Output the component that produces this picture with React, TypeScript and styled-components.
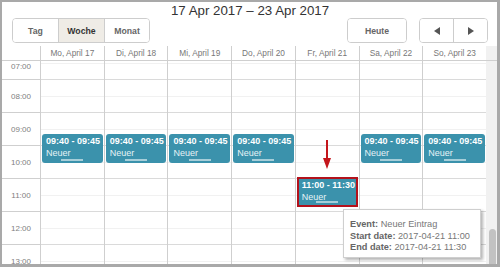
import React from 'react'
import styled, { createGlobalStyle } from 'styled-components'

const HOUR = 33
const HOURS = ['07:00', '08:00', '09:00', '10:00', '11:00', '12:00', '13:00', '14:00']
const DAYS = [
  'Mo, April 17',
  'Di, April 18',
  'Mi, April 19',
  'Do, April 20',
  'Fr, April 21',
  'Sa, April 22',
  'So, April 23'
]

type CalEvent = { day: number; top: number; height: number; time: string; text: string; selected?: boolean }

const events: CalEvent[] = [0, 1, 2, 3, 5, 6]
  .map((day): CalEvent => ({ day, top: 87, height: 29, time: '09:40 - 09:45', text: 'Neuer' }))
  .concat([{ day: 4, top: 130, height: 30, time: '11:00 - 11:30', text: 'Neuer', selected: true }])

const GlobalStyle = createGlobalStyle`
  html, body {
    margin: 0;
    padding: 0;
    background: #fff;
  }

  body {
    font-family: 'Liberation Sans', Arial, sans-serif;
  }

  *, *::before, *::after {
    box-sizing: border-box;
  }
`

const Frame = styled.div`
  background: #fff;
  border: solid #a9a9a9;
  border-width: 2px 3px 3px 2px;
  display: flex;
  flex-direction: column;
  height: 267px;
  overflow: hidden;
  position: relative;
  width: 500px;
`

const NavLine = styled.header`
  display: grid;
  flex: none;
  grid-template-rows: 14px 25px;
  padding: 2px 9px 3px 10px;
`

const Title = styled.div`
  color: #333;
  font-size: 13.3px;
  line-height: 14px;
  text-align: center;
`

const Toolbar = styled.div`
  display: flex;
  justify-content: space-between;
`

const ToolGroup = styled.div`
  display: flex;
  gap: 12px;
`

const Segmented = styled.div`
  border: 1px solid #cdcdcd;
  border-radius: 4px;
  display: flex;
  overflow: hidden;
`

const NavButton = styled.button<{ $width: number; $active?: boolean }>`
  align-items: center;
  background: ${(p) => (p.$active ? '#efece6' : '#fff')};
  border: none;
  color: ${(p) => (p.$active ? '#333' : '#666')};
  display: flex;
  font-family: inherit;
  font-size: 8.7px;
  font-weight: bold;
  justify-content: center;
  margin: 0;
  padding: 0;
  width: ${(p) => p.$width}px;

  & + & {
    border-left: 1px solid #cdcdcd;
  }
`

const HeaderRow = styled.div`
  border-bottom: 1px solid #cfcfcf;
  display: grid;
  flex: none;
  grid-template-columns: 38px repeat(7, 1fr) 11px;
  height: 15px;
`

const DayLabel = styled.div`
  border-left: 1px solid #cfcfcf;
  color: #777;
  font-size: 8.3px;
  line-height: 14px;
  text-align: center;
  white-space: nowrap;
`

const ScrollCorner = styled.div`
  background: #f1f1f1;
`

const Body = styled.div`
  display: grid;
  flex: 1;
  grid-template-columns: 1fr 11px;
  min-height: 0;
`

const Scroller = styled.div`
  overflow: hidden;
`

const Timeline = styled.div`
  display: grid;
  grid-template-columns: 38px repeat(7, 1fr);
  margin-top: -14px;
`

const HourScale = styled.div`
  display: flex;
  flex-direction: column;
`

const HourCell = styled.div`
  align-items: center;
  border-bottom: 1px solid #cfcfcf;
  color: #808080;
  display: flex;
  font-size: 8px;
  height: ${HOUR}px;
  justify-content: center;

  &:first-child {
    align-items: flex-end;
    padding-bottom: 8px;
  }
`

const DayColumn = styled.div`
  background: repeating-linear-gradient(
    to bottom,
    transparent 0 16px,
    #f1f1f1 16px 17px,
    transparent 17px 32px,
    #dadada 32px 33px
  );
  border-left: 1px solid #cfcfcf;
  height: ${HOURS.length * HOUR}px;
  position: relative;
`

const EventBox = styled.div<{ $selected?: boolean }>`
  background: #3b92ac;
  border: ${(p) => (p.$selected ? '2px solid #b3121c' : 'none')};
  border-radius: ${(p) => (p.$selected ? '0' : '3px')};
  color: #fff;
  left: 1px;
  padding: ${(p) => (p.$selected ? '1px 3px' : '2px 4px')};
  position: absolute;
  right: 1px;
`

const EventTime = styled.div`
  font-size: 9px;
  font-weight: bold;
  line-height: 11px;
  white-space: nowrap;
`

const EventText = styled.div`
  color: #e6f2f6;
  font-size: 9px;
  line-height: 12px;
`

const ResizeBar = styled.div`
  background: rgba(255, 255, 255, 0.55);
  bottom: 2px;
  height: 2px;
  left: calc(50% - 11px);
  position: absolute;
  width: 22px;
`

const Pointer = styled.svg`
  left: calc(50% - 5px);
  position: absolute;
  top: 93px;
`

const Track = styled.div`
  background: #f1f1f1;
  display: flex;
  flex-direction: column;
  justify-content: flex-end;
  padding: 0 1px 0 3px;
`

const Thumb = styled.div`
  background: #c2c2c2;
  border-radius: 4px 4px 0 0;
  height: 35px;
`

const Tooltip = styled.div`
  background: #fff;
  border: 1px solid #cfcfcf;
  box-shadow: 2px 2px 3px rgba(0, 0, 0, 0.3);
  color: #777;
  font-size: 9.2px;
  height: 49px;
  left: 341px;
  line-height: 11.5px;
  padding: 9px 0 0 6px;
  position: absolute;
  top: 207px;
  white-space: nowrap;
  width: 138px;
`

const TipLabel = styled.b`
  color: #666;
`

const Arrow = ({ dir }: { dir: 'left' | 'right' }) => (
  <svg width="6" height="8" viewBox="0 0 6 8">
    <polygon points={dir === 'left' ? '6,0 6,8 0,4' : '0,0 0,8 6,4'} fill="#555" />
  </svg>
)

const App = () => (
  <>
    <GlobalStyle />
    <Frame>
      <NavLine>
        <Title>17 Apr 2017 – 23 Apr 2017</Title>
        <Toolbar>
          <Segmented>
            <NavButton $width={45}>Tag</NavButton>
            <NavButton $width={46} $active>
              Woche
            </NavButton>
            <NavButton $width={45}>Monat</NavButton>
          </Segmented>
          <ToolGroup>
            <Segmented>
              <NavButton $width={58}>Heute</NavButton>
            </Segmented>
            <Segmented>
              <NavButton $width={33} aria-label="Zurück">
                <Arrow dir="left" />
              </NavButton>
              <NavButton $width={34} aria-label="Weiter">
                <Arrow dir="right" />
              </NavButton>
            </Segmented>
          </ToolGroup>
        </Toolbar>
      </NavLine>

      <HeaderRow>
        <div />
        {DAYS.map((d) => (
          <DayLabel key={d}>{d}</DayLabel>
        ))}
        <ScrollCorner />
      </HeaderRow>

      <Body>
        <Scroller>
          <Timeline>
            <HourScale>
              {HOURS.map((h) => (
                <HourCell key={h}>{h}</HourCell>
              ))}
            </HourScale>
            {DAYS.map((d, i) => (
              <DayColumn key={d}>
                {events
                  .filter((e) => e.day === i)
                  .map((e) => (
                    <EventBox
                      key={e.time}
                      $selected={e.selected}
                      style={{ top: e.top, height: e.height }}
                    >
                      <EventTime>{e.time}</EventTime>
                      <EventText>{e.text}</EventText>
                      <ResizeBar />
                    </EventBox>
                  ))}
                {i === 4 && (
                  <Pointer width="10" height="29" viewBox="0 0 10 29">
                    <line x1="5" y1="0" x2="5" y2="20" stroke="#c4161c" strokeWidth="2" />
                    <polygon points="1,18 9,18 5,29" fill="#c4161c" />
                  </Pointer>
                )}
              </DayColumn>
            ))}
          </Timeline>
        </Scroller>
        <Track>
          <Thumb />
        </Track>
      </Body>

      <Tooltip>
        <div>
          <TipLabel>Event:</TipLabel> Neuer Eintrag
        </div>
        <div>
          <TipLabel>Start date:</TipLabel> 2017-04-21 11:00
        </div>
        <div>
          <TipLabel>End date:</TipLabel> 2017-04-21 11:30
        </div>
      </Tooltip>
    </Frame>
  </>
)

export default App
